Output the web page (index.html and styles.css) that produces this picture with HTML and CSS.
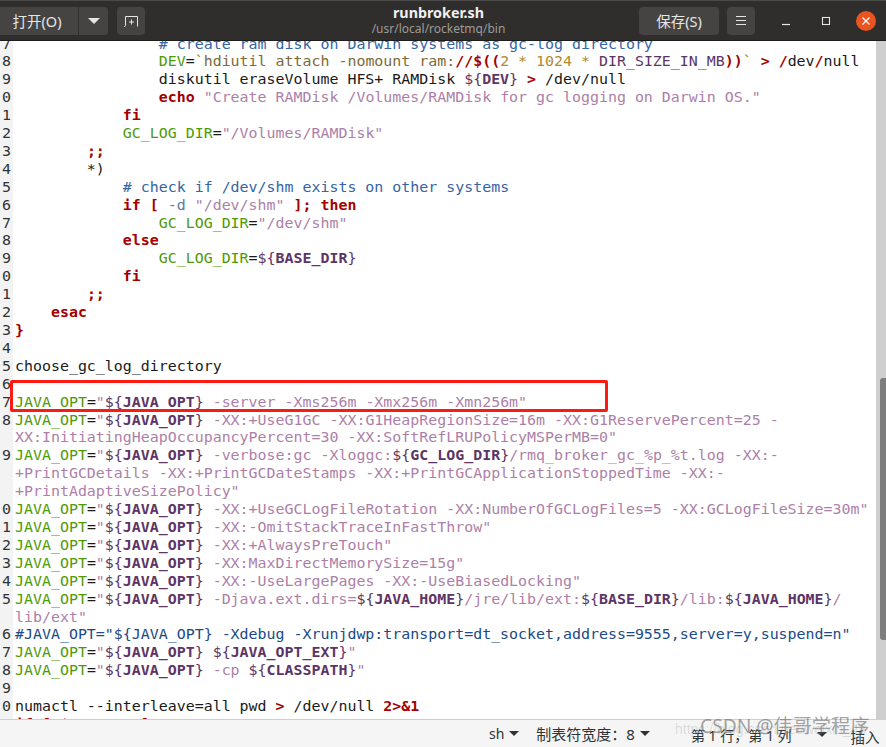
FILE: index.html
```html
<!DOCTYPE html>
<html lang="zh">
<head>
<meta charset="utf-8">
<title>runbroker.sh</title>
<link rel="stylesheet" href="styles.css">
</head>
<body>
<div class="window">
  <header class="headerbar">
    <div class="hb-left">
      <div class="split">
        <button class="btn btn-open">打开(O)</button>
        <button class="btn btn-arrow"><svg width="12" height="6" viewBox="0 0 12 6"><path d="M0 0h12L6 6z" fill="#e6e6e6"/></svg></button>
      </div>
      <button class="btn btn-icon"><svg width="16" height="16" viewBox="0 0 16 16" fill="none" stroke="#e6e6e6" stroke-width="1"><path d="M1 13.500c1.200 0 1.500-.5 1.500-1.500V3.500h12v10"/><path d="M8.500 6.500v5M6 9h5"/></svg></button>
    </div>
    <div class="hb-title">
      <div class="title">runbroker.sh</div>
      <div class="subtitle">/usr/local/rocketmq/bin</div>
    </div>
    <div class="hb-right">
      <button class="btn btn-save">保存(S)</button>
      <button class="btn btn-icon btn-menu"><svg width="12" height="10" viewBox="0 0 12 10" stroke="#e6e6e6" stroke-width="1"><path d="M1 .5h10M1 4.500h10M1 8.500h10"/></svg></button>
      <span class="wc"><svg width="10" height="10" viewBox="0 0 10 10"><path d="M1 8.500h8" stroke="#e6e6e6" stroke-width="1.200"/></svg></span>
      <span class="wc"><svg width="10" height="10" viewBox="0 0 10 10"><rect x="1.500" y="1.500" width="7" height="7" fill="none" stroke="#e6e6e6" stroke-width="1.100"/></svg></span>
      <span class="wc"><span class="close"><svg width="10" height="10" viewBox="0 0 10 10"><path d="M1.500 1.500l7 7M8.500 1.500l-7 7" stroke="#fff" stroke-width="1.300"/></svg></span></span>
    </div>
  </header>

  <div class="body">
    <main class="editor">
      <div class="lines">
        <div class="row"><span class="num">7</span><span class="code">                <i class="c"># create ram disk on Darwin systems as gc-log directory</i></span></div>
        <div class="row"><span class="num">8</span><span class="code">                <i class="v">DEV</i>=<i class="t">`hdiutil attach -nomount ram:</i><i class="o">//$((</i><i class="n">2 * 1024 * </i><i class="d">DIR_SIZE_IN_MB</i><i class="o">))</i><i class="t">`</i> <i class="o">&gt;</i> <i class="o">/</i>dev<i class="o">/</i>null</span></div>
        <div class="row"><span class="num">9</span><span class="code">                diskutil eraseVolume HFS+ RAMDisk <i class="d">${<b>DEV</b>}</i> <i class="o">&gt;</i> /dev/null</span></div>
        <div class="row"><span class="num">0</span><span class="code">                <i class="o">echo</i> <i class="s">"Create RAMDisk /Volumes/RAMDisk for gc logging on Darwin OS."</i></span></div>
        <div class="row"><span class="num">1</span><span class="code">            <i class="o">fi</i></span></div>
        <div class="row"><span class="num">2</span><span class="code">            <i class="v">GC_LOG_DIR</i>=<i class="s">"/Volumes/RAMDisk"</i></span></div>
        <div class="row"><span class="num">3</span><span class="code">        <i class="o">;;</i></span></div>
        <div class="row"><span class="num">4</span><span class="code">        *)</span></div>
        <div class="row"><span class="num">5</span><span class="code">            <i class="c"># check if /dev/shm exists on other systems</i></span></div>
        <div class="row"><span class="num">6</span><span class="code">            <i class="o">if</i> <i class="o">[</i> <i class="f">-d</i> <i class="s">"/dev/shm"</i> <i class="o">];</i> <i class="o">then</i></span></div>
        <div class="row"><span class="num">7</span><span class="code">                <i class="v">GC_LOG_DIR</i>=<i class="s">"/dev/shm"</i></span></div>
        <div class="row"><span class="num">8</span><span class="code">            <i class="o">else</i></span></div>
        <div class="row"><span class="num">9</span><span class="code">                <i class="v">GC_LOG_DIR</i>=<i class="d">${<b>BASE_DIR</b>}</i></span></div>
        <div class="row"><span class="num">0</span><span class="code">            <i class="o">fi</i></span></div>
        <div class="row"><span class="num">1</span><span class="code">        <i class="o">;;</i></span></div>
        <div class="row"><span class="num">2</span><span class="code">    <i class="o">esac</i></span></div>
        <div class="row"><span class="num">3</span><span class="code"><i class="o">}</i></span></div>
        <div class="row"><span class="num">4</span><span class="code"></span></div>
        <div class="row"><span class="num">5</span><span class="code">choose_gc_log_directory</span></div>
        <div class="row"><span class="num">6</span><span class="code"></span></div>
        <div class="row"><span class="num">7</span><span class="code"><i class="v">JAVA_OPT</i>=<i class="s">"<i class="d">${<b>JAVA_OPT</b>}</i> -server -Xms256m -Xmx256m -Xmn256m"</i></span></div>
        <div class="row"><span class="num">8</span><span class="code"><i class="v">JAVA_OPT</i>=<i class="s">"<i class="d">${<b>JAVA_OPT</b>}</i> -XX:+UseG1GC -XX:G1HeapRegionSize=16m -XX:G1ReservePercent=25 -</i></span></div>
        <div class="row"><span class="num"></span><span class="code"><i class="s">XX:InitiatingHeapOccupancyPercent=30 -XX:SoftRefLRUPolicyMSPerMB=0"</i></span></div>
        <div class="row"><span class="num">9</span><span class="code"><i class="v">JAVA_OPT</i>=<i class="s">"<i class="d">${<b>JAVA_OPT</b>}</i> -verbose:gc -Xloggc:<i class="d">${<b>GC_LOG_DIR</b>}</i>/rmq_broker_gc_%p_%t.log -XX:-</i></span></div>
        <div class="row"><span class="num"></span><span class="code"><i class="s">+PrintGCDetails -XX:+PrintGCDateStamps -XX:+PrintGCApplicationStoppedTime -XX:-</i></span></div>
        <div class="row"><span class="num"></span><span class="code"><i class="s">+PrintAdaptiveSizePolicy"</i></span></div>
        <div class="row"><span class="num">0</span><span class="code"><i class="v">JAVA_OPT</i>=<i class="s">"<i class="d">${<b>JAVA_OPT</b>}</i> -XX:+UseGCLogFileRotation -XX:NumberOfGCLogFiles=5 -XX:GCLogFileSize=30m"</i></span></div>
        <div class="row"><span class="num">1</span><span class="code"><i class="v">JAVA_OPT</i>=<i class="s">"<i class="d">${<b>JAVA_OPT</b>}</i> -XX:-OmitStackTraceInFastThrow"</i></span></div>
        <div class="row"><span class="num">2</span><span class="code"><i class="v">JAVA_OPT</i>=<i class="s">"<i class="d">${<b>JAVA_OPT</b>}</i> -XX:+AlwaysPreTouch"</i></span></div>
        <div class="row"><span class="num">3</span><span class="code"><i class="v">JAVA_OPT</i>=<i class="s">"<i class="d">${<b>JAVA_OPT</b>}</i> -XX:MaxDirectMemorySize=15g"</i></span></div>
        <div class="row"><span class="num">4</span><span class="code"><i class="v">JAVA_OPT</i>=<i class="s">"<i class="d">${<b>JAVA_OPT</b>}</i> -XX:-UseLargePages -XX:-UseBiasedLocking"</i></span></div>
        <div class="row"><span class="num">5</span><span class="code"><i class="v">JAVA_OPT</i>=<i class="s">"<i class="d">${<b>JAVA_OPT</b>}</i> -Djava.ext.dirs=<i class="d">${<b>JAVA_HOME</b>}</i>/jre/lib/ext:<i class="d">${<b>BASE_DIR</b>}</i>/lib:<i class="d">${<b>JAVA_HOME</b>}</i>/</i></span></div>
        <div class="row"><span class="num"></span><span class="code"><i class="s">lib/ext"</i></span></div>
        <div class="row"><span class="num">6</span><span class="code"><i class="h">#JAVA_OPT="${JAVA_OPT} -Xdebug -Xrunjdwp:transport=dt_socket,address=9555,server=y,suspend=n"</i></span></div>
        <div class="row"><span class="num">7</span><span class="code"><i class="v">JAVA_OPT</i>=<i class="s">"<i class="d">${<b>JAVA_OPT</b>}</i> <i class="d">${<b>JAVA_OPT_EXT</b>}</i>"</i></span></div>
        <div class="row"><span class="num">8</span><span class="code"><i class="v">JAVA_OPT</i>=<i class="s">"<i class="d">${<b>JAVA_OPT</b>}</i> -cp <i class="d">${<b>CLASSPATH</b>}</i>"</i></span></div>
        <div class="row"><span class="num">9</span><span class="code"></span></div>
        <div class="row"><span class="num">0</span><span class="code">numactl --interleave=all pwd <i class="o">&gt;</i> /dev/null <i class="o">2&gt;&amp;1</i></span></div>
        <div class="row"><span class="num">1</span><span class="code"><i class="o">if</i> <i class="o">[</i> <i class="d">$?</i> -eq 0 <i class="o">]</i></span></div>
      </div>
    </main>
    <div class="scrollbar"><div class="thumb"></div></div>
  </div>

  <footer class="statusbar">
    <span class="st st-lang">sh<svg class="caret" width="10" height="5" viewBox="0 0 10 5"><path d="M0 0h10L5 5z"/></svg></span>
    <span class="st st-tab">制表符宽度：8<svg class="caret" width="10" height="5" viewBox="0 0 10 5"><path d="M0 0h10L5 5z"/></svg></span>
    <span class="st st-pos">第 1 行，第 1 列<svg class="caret caret-pos" width="10" height="5" viewBox="0 0 10 5"><path d="M0 0h10L5 5z"/></svg></span>
    <span class="st st-ins">插入</span>
  </footer>

  <div class="redbox"></div>
  <div class="wm-url">https://blog.csdn.net/weixin_43</div>
  <div class="wm-csdn">CSDN @伟哥学程序</div>
</div>
</body>
</html>
```
FILE: styles.css
```css
* { box-sizing: border-box; }
html, body { margin: 0; padding: 0; }
body { overflow: hidden; background: #fff; }
.window {
  position: relative;
  width: 886px;
  height: 747px;
  display: flex;
  flex-direction: column;
  overflow: hidden;
  font-family: "Noto Sans", "Noto Sans CJK SC", sans-serif;
}

/* header */
.headerbar {
  height: 41px;
  flex: none;
  background: #2f2e2d;
  border-top: 1px solid #4a4a48;
  border-bottom: 1px solid #1d1d1c;
  display: grid;
  grid-template-columns: 1fr auto 1fr;
  align-items: center;
  color: #e6e6e6;
}
.hb-left { display: flex; align-items: center; gap: 9px; }
.hb-right { display: flex; align-items: center; justify-content: flex-end; }
.split { display: flex; }
.btn {
  height: 28px;
  border: 0;
  padding: 0;
  margin: 0;
  background: #454442;
  color: #e6e6e6;
  font: 14.500px "Noto Sans", "Noto Sans CJK SC", sans-serif;
  display: flex;
  align-items: center;
  justify-content: center;
}
.btn-open { width: 79px; padding-right: 4px; border-right: 1px solid #2f2e2d; border-radius: 0; }
.btn-arrow { width: 29px; border-radius: 0 4px 4px 0; }
.btn-icon { width: 28px; border-radius: 4px; }
.btn-save { width: 80px; border-radius: 4px; margin-right: 8px; }
.btn-menu { margin-right: 11px; }
.hb-title { text-align: center; padding-right: 9px; line-height: 1; }
.title { font-size: 14.300px; font-weight: 700; color: #f0f0f0; line-height: 17px; }
.subtitle { font-size: 12px; color: #9c9b99; line-height: 16px; }
.wc { width: 40px; height: 28px; display: flex; align-items: center; justify-content: center; }
.close {
  width: 20px;
  height: 20px;
  border-radius: 50%;
  background: #e95420;
  display: flex;
  align-items: center;
  justify-content: center;
}

/* editor */
.body { flex: 1; min-height: 0; display: flex; }
.editor { flex: 1; min-width: 0; overflow: hidden; background: #fff; }
.lines { margin-top: -5.500px; }
.row { display: flex; height: 17.920px; }
.num {
  width: 13px;
  flex: none;
  padding-left: 2px;
  background: #f3f3f3;
  color: #2e3436;
  font: 14.930px/17.920px "DejaVu Sans Mono", monospace;
}
.code {
  padding-left: 2px;
  white-space: pre;
  color: #1a1a1a;
  font: 14.930px/17.920px "DejaVu Sans Mono", monospace;
}
.code i { font-style: normal; }
.code b { font-weight: 700; }
.c { color: #3465a4; }
.h { color: #204a87; }
.v { color: #4e9a06; }
.s { color: #ad7fa8; }
.o { color: #a40000; font-weight: 700; }
.d { color: #5c3566; }
.t { color: #7b6a3a; }
.n { color: #b08a2e; }
.f { color: #5b7aa8; }

.scrollbar {
  width: 10px;
  flex: none;
  background: #cfcfcf;
  padding-left: 4px;
}
.thumb {
  margin-top: 337px;
  height: 262px;
  background: #7d7d7d;
  border-radius: 3px 0 0 3px;
}

/* status bar */
.statusbar {
  height: 28px;
  flex: none;
  background: #f5f5f5;
  border-top: 1px solid #cfcfcf;
  display: flex;
  align-items: center;
  color: #2e3436;
  font-size: 14px;
  padding-left: 489px;
}
.st { display: flex; align-items: center; white-space: nowrap; }
.st-tab { margin-left: 17px; font-size: 15px; }
.st-pos { margin-left: 41px; padding-top: 2px; }
.st-ins { margin-left: 24px; font-size: 14.500px; padding-top: 5px; }
.caret { margin-left: 5px; fill: #2e3436; }
.caret-pos { margin-left: 25px; }

/* overlays */
.redbox {
  position: absolute;
  left: 10px;
  top: 380px;
  width: 598px;
  height: 32px;
  border: 3px solid #fb1b12;
  border-radius: 2px;
}
.wm-url {
  position: absolute;
  left: 675px;
  top: 719px;
  width: 203px;
  overflow: hidden;
  white-space: nowrap;
  font: 14px/20px "Liberation Sans", sans-serif;
  color: rgba(120, 120, 120, 0.22);
}
.wm-csdn {
  position: absolute;
  left: 700px;
  top: 714px;
  white-space: nowrap;
  font: 19.200px/24px "Noto Sans", "Noto Sans CJK SC", sans-serif;
  color: rgba(90, 90, 90, 0.55);
}
```
